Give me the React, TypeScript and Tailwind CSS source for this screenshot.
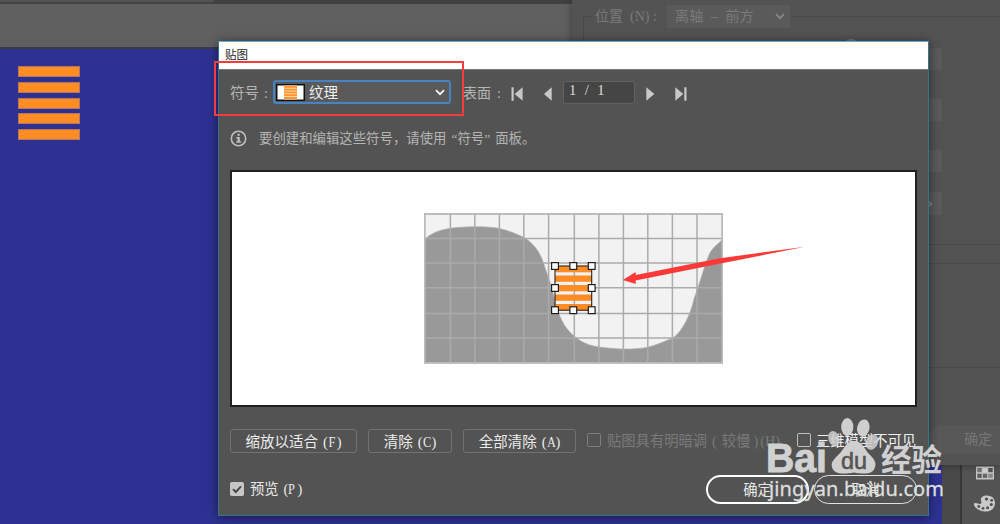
import type { ReactNode } from 'react';

const FONT = "font-['Liberation_Serif','Noto_Sans_CJK_SC',sans-serif]";

function Key({ children }: { children: ReactNode }) {
  return (
    <span className="ml-[5px] inline-flex items-center font-['Liberation_Serif',serif] text-[14.5px]">
      (<span className="inline-block w-[9px] origin-left scale-x-[0.85]">{children}</span>)
    </span>
  );
}

function PushButton({ label, hotkey, width }: { label: string; hotkey: string; width: string }) {
  return (
    <button className={`${width} flex h-6 items-center justify-center rounded-[3px] border border-[#727272] pt-[2px] text-[14.5px] leading-none text-[#ececec]`}>
      <span>{label}</span>
      <Key>{hotkey}</Key>
    </button>
  );
}

function Chevron({ className }: { className: string }) {
  return (
    <svg width="10" height="7" viewBox="0 0 10 7" className={className}>
      <path d="M1 1.2 L5 5.2 L9 1.2" fill="none" stroke="currentColor" strokeWidth="1.7" />
    </svg>
  );
}

const columns = [424.8, 450.4, 474.8, 499.4, 523.8, 548.6, 574.3, 598.9, 623.4, 647.8, 672.4, 697, 722.2];
const rows = [214, 238.4, 263, 287.8, 313.4, 338, 362.8];
const handles: [number, number][] = [
  [555, 266], [573.3, 266], [591.7, 266],
  [555, 288], [591.7, 288],
  [555, 310.2], [573.3, 310.2], [591.7, 310.2],
];

function MapCanvas() {
  return (
    <svg width="683" height="233" viewBox="232 172 683 233" className="block">
      <rect x="424" y="213" width="299" height="150" fill="#f2f2f2" />
      <path
        d="M425 239 C434 231 444 229 457 227.5 C471 226.5 486 226.5 497 228 C507 230 517 234 525 238 C537 246 542 257 545 268 C550 281 552 288 555 302 C559 316 564 328 574 336 C583 344 593 347 608 348 C623 350 637 349 647 347.5 C657 345 665 341 673 338 C683 331 691 313 694 299 C700 283 704 267 709 255 C712 248 717 245 722 240 V363 H425 Z"
        fill="#999999" stroke="#adadad" strokeWidth="0.8"
      />
      <g stroke="#ababab" strokeWidth="1.5">
        {columns.map((x) => <path key={x} d={`M${x} 213 V363.5`} />)}
        {rows.map((y) => <path key={y} d={`M424 ${y} H723`} />)}
      </g>
      <rect x="424.7" y="213.8" width="297.6" height="149" fill="none" stroke="#bcbcbc" strokeWidth="1.3" />
      <g fill="#ff8c24">
        <rect x="555" y="266" width="37" height="6.3" />
        <rect x="555" y="275.5" width="37" height="6.3" />
        <rect x="555" y="285" width="37" height="6.3" />
        <rect x="555" y="294.5" width="37" height="6.3" />
        <rect x="555" y="304" width="37" height="6.3" />
      </g>
      <rect x="555" y="266" width="36.7" height="44.2" fill="none" stroke="#2b241e" strokeWidth="1.1" />
      {handles.map(([x, y]) => (
        <rect key={`${x}-${y}`} x={x - 3.4} y={y - 3.4} width="6.8" height="6.8" fill="#fff" stroke="#1e1e1e" strokeWidth="1.2" />
      ))}
      <path d="M622.8 280 L635.6 272 L635.8 275 L720 258.2 L805 246.8 L722 263.3 L635.5 280.6 L636 284 Z" fill="#fb3a38" />
    </svg>
  );
}

function PropertyPanel() {
  return (
    <section className="absolute left-[572px] top-0 h-[465px] w-[428px] bg-[#535353] text-[14px] leading-none text-[#7a7a7a] shadow-[0_0_8px_rgba(0,0,0,0.4)]">
      <div className="flex h-[31px] items-center pl-[11px] pt-[1px]">
        <span className="h-px w-[8px] bg-[#484848]" />
        <span className="ml-[4px] mt-[2px] flex items-center whitespace-nowrap">位置<span className="ml-[7px]">(N)&nbsp;:</span></span>
        <div className="ml-auto mt-[1px] flex h-[23px] w-[123px] items-center bg-[#5a5a5a] pl-[8px] pr-[5px]">
          <span className="mt-[1px] tracking-[0.2px]">离轴&nbsp; –&nbsp; 前方</span>
          <Chevron className="ml-auto text-[#888]" />
        </div>
        <span className="ml-[3px] h-px w-[207px] bg-[#494949]" />
      </div>
      <div className="absolute left-[11px] top-4 h-[30px] w-px bg-[#494949]" />
      <div className="absolute left-[271px] top-[39px] h-4 w-4 rounded-full bg-[#777]" />
      <div className="absolute left-[340px] top-12 flex flex-col">
        <div className="h-[22px] w-[30px] bg-[#5a5a5a]" />
        <div className="mt-[29px] h-[22px] w-[30px] bg-[#5a5a5a]" />
        <div className="mt-[29px] h-[22px] w-[30px] bg-[#5a5a5a]" />
        <div className="mt-[20px] flex h-[23px] w-[30px] items-center bg-[#5a5a5a] pl-[14px]">
          <svg width="7" height="10" viewBox="0 0 7 10"><path d="M1 1 L5.5 5 L1 9" fill="none" stroke="#858585" strokeWidth="1.6" /></svg>
        </div>
      </div>
      <div className="absolute left-[350px] top-[244px] w-[78px] border-t border-[#494949]" />
      <div className="absolute left-[350px] top-[263px] w-[78px] border-t border-[#494949]" />
      <div className="absolute left-[350px] top-[367px] w-[78px] border-t border-[#494949]" />
      <div className="absolute left-[356px] top-[425px] flex h-[29px] w-[90px] items-center rounded-l-full bg-[#585858] pl-[36px] text-[#777]">确定</div>
    </section>
  );
}

function ToolDock() {
  return (
    <aside className="absolute left-[942px] top-[460px] flex h-16 w-[58px] bg-[#494949]">
      <div className="ml-[18px] w-[2px] bg-[#383838]" />
      <div className="flex flex-1 flex-col items-center bg-[#535353] pl-[7px] pt-[6px]">
        <svg width="20" height="14" viewBox="0 0 20 14">
          <rect x="1" y="0.5" width="18" height="13" fill="#c6c6c6" />
          <rect x="2.3" y="2" width="4.4" height="4.2" fill="#767676" />
          <rect x="7.8" y="2" width="4.4" height="4.2" fill="#d8d8d8" />
          <rect x="13.3" y="2" width="4.4" height="4.2" fill="#555" />
          <rect x="2.3" y="7.7" width="4.4" height="4.2" fill="#5c5c5c" />
          <rect x="7.8" y="7.7" width="4.4" height="4.2" fill="#666" />
          <rect x="13.3" y="7.7" width="4.4" height="4.2" fill="#898989" />
        </svg>
        <svg width="23" height="18" viewBox="0 0 23 18" className="mt-[15px]">
          <path d="M13.5 0.5 C19 0.5 22 3.5 22 8 C22 13.5 17.5 17 12.5 16.5 C7 16.2 2 13.5 1 10 C0.3 7.5 3 7.5 5 8.5 C7.5 9.6 9.4 8.4 8.2 6.4 C7 4.2 8.7 0.5 13.5 0.5 Z" fill="#c9c9c9" />
          <g fill="#505050">
            <circle cx="13.5" cy="4" r="1.6" /><circle cx="18.7" cy="5.3" r="1.4" /><circle cx="18.3" cy="9.4" r="1.5" />
            <circle cx="14.6" cy="12.7" r="1.5" /><circle cx="10" cy="13.3" r="1.4" /><circle cx="5.8" cy="11.5" r="1.4" />
          </g>
        </svg>
      </div>
    </aside>
  );
}

function MapArtDialog() {
  return (
    <section className="absolute left-[218px] top-[41px] flex h-[475px] w-[711px] flex-col border border-[#347587] border-t-[#65a9c6] bg-[#535353] shadow-[0_1px_10px_rgba(0,0,0,0.5)]">
      <header className="flex h-[27px] shrink-0 items-center bg-white pl-[6px] text-[11.5px] leading-none text-[#222]">贴图</header>
      <div className="flex flex-1 flex-col border-t border-[#777] px-[11px]">
        <div className="mt-[10px] flex h-6 items-center text-[14.5px] leading-none text-[#b5b5b5]">
          <span className="w-[43px] whitespace-nowrap pt-[3px]">符号<span className="ml-[5px]">:</span></span>
          <div className="flex h-6 w-[178px] items-center rounded-[3px] border-2 border-[#4583c4] bg-[#5a5a5a] pl-[1px] pr-[4px]">
            <svg width="29" height="17" viewBox="0 0 29 17">
              <rect x="0.75" y="0.75" width="27.5" height="15.5" fill="#fff" stroke="#111" strokeWidth="1.5" />
              <rect x="8" y="1.5" width="13" height="14" fill="#ffd6a8" />
              <path d="M8 2.8H21M8 5.6H21M8 8.4H21M8 11.2H21M8 14H21" stroke="#ff942f" strokeWidth="1.8" />
            </svg>
            <span className="ml-[4px] pt-[3px] text-[#efefef]">纹理</span>
            <Chevron className="ml-auto text-white" />
          </div>
          <span className="ml-[12px] w-[50px] whitespace-nowrap pt-[3px] text-[14px]">表面<span className="ml-[6px]">:</span></span>
          <svg width="12" height="14" viewBox="0 0 12 14" className="mt-[3px] -ml-[2px]"><path d="M0.5 0.3h2.2v13.4h-2.2zM11.6 0.3v13.4L3.6 7z" fill="#c8c8c8" /></svg>
          <svg width="8" height="14" viewBox="0 0 8 14" className="ml-[21px] mt-[3px]"><path d="M7.7 0.3v13.4L0 7z" fill="#c8c8c8" /></svg>
          <div className="ml-[11px] h-[23px] w-[72px] rounded-[3px] border border-[#626262] bg-[#454545] pl-[5px] pt-[1px] font-['Liberation_Serif',serif] text-[14.5px] leading-none text-[#ddd]">
            1<span className="mx-[8.5px]">/</span>1
          </div>
          <svg width="9" height="14" viewBox="0 0 9 14" className="ml-[11px] mt-[3px]"><path d="M0.3 0.3v13.4L8.4 7z" fill="#c8c8c8" /></svg>
          <svg width="12" height="14" viewBox="0 0 12 14" className="ml-[20px] mt-[3px]"><path d="M0.3 0.3v13.4L8.3 7zM9.3 0.3h2.2v13.4h-2.2z" fill="#c8c8c8" /></svg>
        </div>
        <div className="mt-[25px] flex h-[18px] items-center text-[13.4px] leading-none text-[#b4b4b4]">
          <svg width="17" height="17" viewBox="0 0 17 17" className="mt-px">
            <circle cx="8.5" cy="8.5" r="7.2" fill="none" stroke="#bdbdbd" strokeWidth="1.6" />
            <path d="M7.5 3.8h2.3v2H7.5zM6.3 7h3.5v4.3h1.2v1.4H6.2v-1.4h1.3V8.4H6.3z" fill="#bdbdbd" />
          </svg>
          <span className="ml-[12px] whitespace-nowrap pt-[1px]">要创建和编辑这些符号，请使用<span className="ml-[5px]">“</span>符号<span className="mr-[5px]">”</span>面板。</span>
        </div>
        <div className="mt-[23px] h-[237px] w-[687px] shrink-0 border-2 border-[#202020] bg-white">
          <MapCanvas />
        </div>
        <div className="mt-[22px] flex h-6 shrink-0 items-center whitespace-nowrap">
          <PushButton label="缩放以适合" hotkey="F" width="w-[127px]" />
          <div className="w-[11px]" />
          <PushButton label="清除" hotkey="C" width="w-[84px]" />
          <div className="w-[11px]" />
          <PushButton label="全部清除" hotkey="A" width="w-[113px]" />
          <span className="-mt-[2px] ml-[11px] h-[14px] w-[14px] rounded-[2px] border border-[#7d7d7d]" />
          <span className="ml-[6px] w-[190px] text-[14.3px] leading-none text-[#7a7a7a]">贴图具有明暗调<span className="mx-[5px]">(</span>较慢<span className="ml-[3px] mr-[2px]">)</span>(H)</span>
          <span className="-mt-[2px] h-[14px] w-[14px] shrink-0 rounded-[2px] border border-[#bbb]" />
          <span className="ml-[5px] text-[14.3px] leading-none text-[#f0f0f0]">三维模型不可见</span>
        </div>
        <div className="mt-[22px] flex h-[29px] shrink-0 items-center text-[14.3px] leading-none text-[#e8e8e8]">
          <svg width="14" height="14" viewBox="0 0 14 14" className="-mt-[2px] mr-[6px]">
            <rect width="14" height="14" rx="1.8" fill="#c6c6c6" />
            <path d="M3 7.2L5.8 10L11 4.3" fill="none" stroke="#454545" strokeWidth="1.9" />
          </svg>
          <span className="flex items-center">预览<Key>P</Key></span>
          <button className="ml-auto h-[29px] w-[103px] rounded-full border-2 border-white pt-[1px]">确定</button>
          <button className="ml-[5px] h-[29px] w-[103px] rounded-full border-[1.5px] border-[#e2e2e2] pt-[1px]">取消</button>
        </div>
      </div>
    </section>
  );
}

function Watermark() {
  return (
    <div className="absolute left-[767px] top-[416px] h-[90px] w-[180px]">
      <svg width="180" height="90" viewBox="767 416 180 90">
        <g fill="#cfcfcf">
          <ellipse cx="847.3" cy="427" rx="6.1" ry="9" />
          <ellipse cx="863.3" cy="428" rx="6.2" ry="8.7" transform="rotate(12 863.3 428)" />
          <ellipse cx="834" cy="438.8" rx="5.5" ry="8" transform="rotate(-18 834 438.8)" opacity="0.85" />
          <ellipse cx="872" cy="442" rx="6" ry="8" transform="rotate(24 872 442)" opacity="0.85" />
          <path d="M854 441 C862 441 864 448 868 453 C873 458 877 462 875 467 C873 475 864 474 854 472.5 C844 474 834 475 832 467 C830 461 837 457 841 452 C845 447 847 441 854 441 Z" />
        </g>
        <text x="766" y="472" fill="#d1d1d1" fontFamily="Liberation Sans, sans-serif" fontWeight="700" fontSize="40" textLength="61" lengthAdjust="spacingAndGlyphs" stroke="#d1d1d1" strokeWidth="0.9">Bai</text>
        <text x="841" y="469" fill="#555" fontFamily="Liberation Sans, sans-serif" fontSize="24" textLength="26" lengthAdjust="spacingAndGlyphs" stroke="#555" strokeWidth="0.6">du</text>
        <text x="881" y="470.5" fill="#d0d0d0" fontFamily="Noto Sans CJK SC, sans-serif" fontWeight="700" fontSize="30.5">经验</text>
        <text x="769" y="496" fill="#dedede" stroke="#dedede" strokeWidth="0.3" fontFamily="Noto Sans, sans-serif" fontSize="20" textLength="175">jingyan.baidu.com</text>
      </svg>
    </div>
  );
}

export default function App() {
  return (
    <main className={`${FONT} relative flex h-[524px] w-[1000px] flex-col overflow-hidden bg-[#2e3192]`}>
      <div className="flex h-[2px]"><span className="w-[214px] bg-[#535353]" /><span className="flex-1 bg-[#404040]" /></div>
      <div className="h-[2px] bg-[#424242]" />
      <div className="h-[43px] bg-[#606060]" />
      <div className="h-[2px] bg-[#383b49]" />
      <div className="ml-[18px] mt-[17px] flex w-[62px] flex-col gap-[4.8px]">
        <i className="h-[11px] border border-[#b07767] bg-[#ff8d24]" />
        <i className="h-[11px] border border-[#b07767] bg-[#ff8d24]" />
        <i className="h-[11px] border border-[#b07767] bg-[#ff8d24]" />
        <i className="h-[11px] border border-[#b07767] bg-[#ff8d24]" />
        <i className="h-[11px] border border-[#b07767] bg-[#ff8d24]" />
      </div>
      <ToolDock />
      <PropertyPanel />
      <MapArtDialog />
      <div className="absolute left-[214px] top-[61px] h-[55px] w-[250px] border-2 border-[#f63d3d]" />
      <Watermark />
    </main>
  );
}
